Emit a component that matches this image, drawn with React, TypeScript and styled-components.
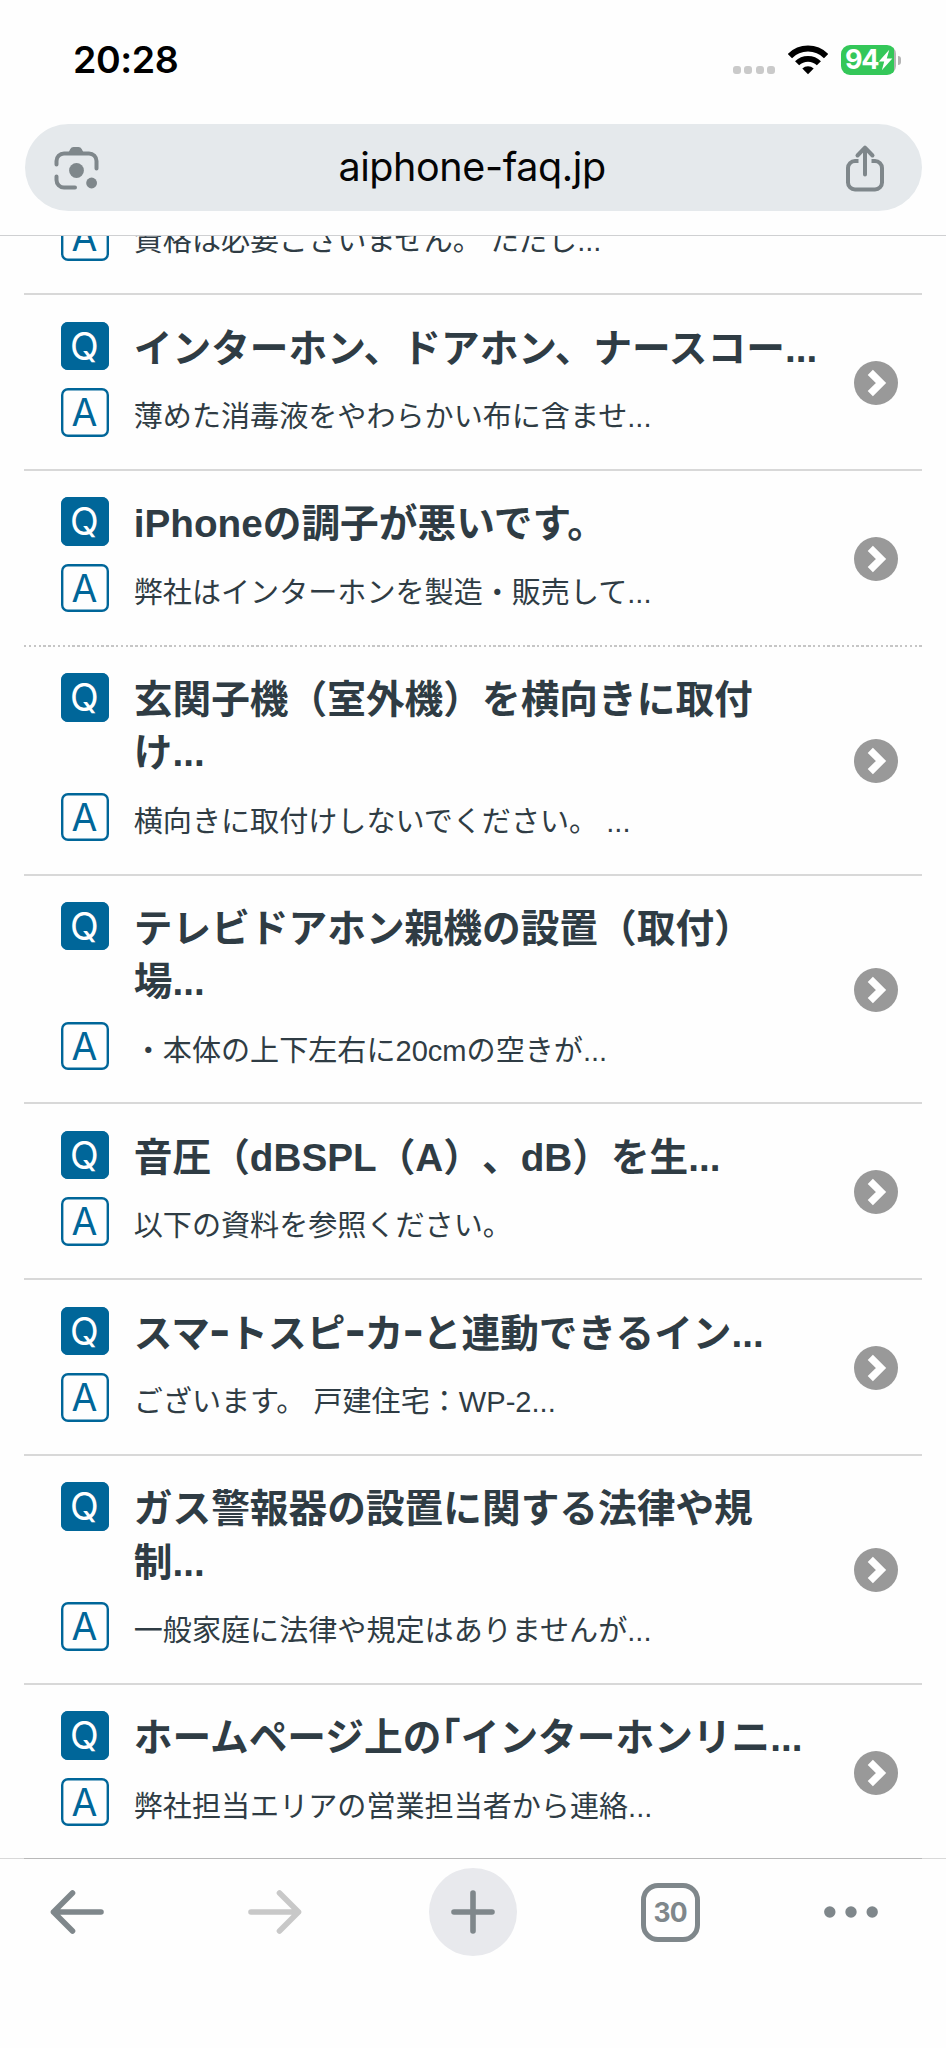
import React from 'react';
import styled, { createGlobalStyle } from 'styled-components';

const GlobalStyle = createGlobalStyle`
  html, body { margin: 0; padding: 0; background: #fefefe; }
  * { box-sizing: border-box; }
`;

const textFont = `'Liberation Sans', 'Noto Sans CJK JP', sans-serif`;
const systemFont = `Inter, sans-serif`;
const iconGray = '#7f878b';

const Screen = styled.div`
  width: 946px;
  height: 2048px;
  display: flex;
  flex-direction: column;
  overflow: hidden;
  background: #fefefe;
`;

const StatusBar = styled.header`
  flex: none;
  height: 124px;
  padding: 0 45px 4px 73px;
  display: flex;
  align-items: center;
  justify-content: space-between;
`;

const Clock = styled.time`
  font: 600 37.5px/46px ${systemFont};
  letter-spacing: -0.4px;
  color: #000;
`;

const StatusIcons = styled.div`
  display: flex;
  align-items: center;
`;

const SignalDots = styled.div`
  display: flex;
  gap: 3.3px;
  margin: 20px 13px 0 0;
`;

const SignalDot = styled.i`
  width: 8px;
  height: 8px;
  border-radius: 3px;
  background: #cacaca;
`;

const WifiSvg = styled.svg`
  width: 40px;
  height: 30px;
  margin-right: 13px;
`;

const Battery = styled.div`
  width: 55px;
  height: 30px;
  border-radius: 9px;
  background: linear-gradient(90deg, #34c759 52.5px, #b4b4b4 52.5px);
  display: flex;
  align-items: center;
  padding-left: 4px;
  font: 700 27px/30px ${systemFont};
  letter-spacing: -1.4px;
  color: #fff;
`;

const BatteryNub = styled.i`
  width: 3px;
  height: 9px;
  margin-left: 2px;
  border-radius: 0 4px 4px 0;
  background: #b4b4b4;
`;

const AddressArea = styled.div`
  flex: none;
  height: 112px;
  padding: 0 24.5px;
  border-bottom: 1px solid #cfd0d2;
`;

const AddressPill = styled.div`
  height: 87px;
  padding: 0 36.3px 0 28.5px;
  border-radius: 44px;
  background: #e5e9ec;
  display: flex;
  align-items: center;
  justify-content: space-between;
`;

const Url = styled.span`
  margin-top: -2px;
  font: 400 39.5px/50px ${systemFont};
  letter-spacing: -0.4px;
  color: #050505;
`;

const Viewport = styled.main`
  flex: none;
  height: 1622px;
  overflow: hidden;
`;

const FaqList = styled.ul`
  list-style: none;
  margin: -23.5px 24px 0;
  padding: 0;
`;

const FaqItem = styled.li<{ $dotted?: boolean }>`
  display: flex;
  align-items: center;
  padding: 26.4px 24.2px 32.1px 36.6px;
  font-family: ${textFont};
  color: #2f3c44;
  text-spacing-trim: space-all;
  border-bottom: 2px solid #d8d8d8;
  ${p => p.$dotted && `
    border-bottom-color: transparent;
    background: repeating-linear-gradient(90deg, #c6c6c6 0 2.42px, #fefefe 2.42px 4.84px) border-box left bottom / 100% 2px no-repeat;
  `}
`;

const TrailingItem = styled(FaqItem)`
  padding-top: 0;
`;

const Body = styled.div`
  flex: 1;
  min-width: 0;
  display: flex;
  flex-direction: column;
  gap: 13.3px;
`;

const Line = styled.div`
  display: flex;
  align-items: flex-start;
  gap: 24.6px;
`;

const Badge = styled.span<{ $filled?: boolean }>`
  flex: none;
  width: 48.6px;
  height: 48.6px;
  padding-right: 1px;
  border-radius: 7px;
  box-shadow: inset 0 0 0 2.4px #006699;
  background: ${p => (p.$filled ? '#006699' : '#fefefe')};
  color: ${p => (p.$filled ? '#fff' : '#006699')};
  font: 400 37.5px/49.5px ${systemFont};
  text-align: center;
`;

const Question = styled.h2<{ $wide?: boolean }>`
  margin: 0 ${p => (p.$wide ? '-30px' : '0')} 0 0;
  font-size: 38.7px;
  line-height: 53.3px;
  font-weight: 700;
`;

const Answer = styled.p`
  margin: 4.8px 0 -4.8px;
  font-size: 29.08px;
  line-height: 48.6px;
`;

const ArrowSvg = styled.svg`
  flex: none;
  width: 44px;
  height: 44px;
  margin: 7.5px 0 0 36px;
`;

const Toolbar = styled.nav`
  flex: 1;
  background: #fefefe;
`;

const Divider = styled.div`
  height: 1px;
  padding: 0 24px;
  background: #d9d9d9;
`;

const DividerInset = styled.div`
  height: 1px;
  background: #b9b9b9;
`;

const Actions = styled.div`
  height: 106px;
  display: grid;
  grid-template-columns: 176px 198px 198px 198px 176px;
  align-items: center;
  justify-items: center;
  color: ${iconGray};
`;

const Action = styled.button<{ $align?: string; $muted?: boolean }>`
  display: flex;
  padding: 0;
  border: 0;
  background: none;
  color: ${p => (p.$muted ? '#c8c8c8' : 'inherit')};
  justify-self: ${p => p.$align || 'center'};
  margin: ${p => (p.$align === 'start' ? '0 0 0 50px' : p.$align === 'end' ? '0 68px 0 0' : '0')};
`;

const NewTab = styled(Action)`
  width: 88px;
  height: 88px;
  border-radius: 50%;
  background: #e8e9ed;
  align-items: center;
  justify-content: center;
`;

const TabCount = styled(Action)`
  width: 59px;
  height: 59px;
  margin-right: 1.5px;
  border: 5px solid ${iconGray};
  border-radius: 17px;
  align-items: center;
  justify-content: center;
  font: 700 26.5px/30px ${systemFont};
  letter-spacing: -0.8px;
`;

const LensIcon = () => (
  <svg width="46" height="46" viewBox="0 0 46 46" fill="none" stroke={iconGray} strokeWidth="4" strokeLinecap="round">
    <path d="M3.5 19.5V16a7.5 7.5 0 0 1 7.5-7.5h25a7.5 7.5 0 0 1 7.5 7.5v7.5M3.5 31.5V35a7.5 7.5 0 0 0 7.5 7.5h11" />
    <path d="M15 8.5l2.3-4.4Q18.3 2 20.5 2h5q2.2 0 3.2 2.1L31 8.5z" fill={iconGray} stroke="none" />
    <circle cx="23.5" cy="25.5" r="7.4" fill={iconGray} stroke="none" />
    <circle cx="38.6" cy="38" r="5.4" fill={iconGray} stroke="none" />
  </svg>
);

const ShareIcon = () => (
  <svg width="40" height="48" viewBox="0 0 40 48" fill="none" stroke={iconGray} strokeWidth="4" strokeLinecap="round" strokeLinejoin="round">
    <path d="M13.5 17H10a7 7 0 0 0-7 7v14.5a7 7 0 0 0 7 7h20a7 7 0 0 0 7-7V24a7 7 0 0 0-7-7h-3.5" strokeLinecap="butt" />
    <path d="M20 4v26.5M12.5 11.5L20 3.7l7.5 7.8" />
  </svg>
);

const WifiIcon = () => (
  <WifiSvg viewBox="0 0 40 30">
    <g fill="none" stroke="#000" strokeWidth="6">
      <path d="M1.9 11.1a25.6 25.6 0 0 1 36.2 0" />
      <path d="M9.1 18.3a15.4 15.4 0 0 1 21.8 0" strokeWidth="5.8" />
    </g>
    <path d="M20 29.3l-5.7-5.9a8.4 8.4 0 0 1 11.4 0z" />
  </WifiSvg>
);

const Bolt = () => (
  <svg width="15" height="22" viewBox="0 0 14 20">
    <path d="M10.5 0.5L0.8 11.3h5L3.6 19.5 13.4 8.5H8.2z" fill="#fff" />
  </svg>
);

const Arrow = () => (
  <ArrowSvg viewBox="0 0 44 44">
    <circle cx="22" cy="22" r="22" fill="#999" />
    <path d="M16.3 11.3L27 22 16.3 32.7" fill="none" stroke="#fff" strokeWidth="7.3" />
  </ArrowSvg>
);

const faqs = [
  { q: 'インターホン、ドアホン、ナースコー...', a: '薄めた消毒液をやわらかい布に含ませ...', wide: true },
  { q: 'iPhoneの調子が悪いです。', a: '弊社はインターホンを製造・販売して...', dotted: true },
  { q: '玄関子機（室外機）を横向きに取付け...', a: '横向きに取付けしないでください。 ...' },
  { q: 'テレビドアホン親機の設置（取付）場...', a: '・本体の上下左右に20cmの空きが...' },
  { q: '音圧（dBSPL（A）、dB）を生...', a: '以下の資料を参照ください。' },
  { q: 'スマｰトスピｰカｰと連動できるイン...', a: 'ございます。 戸建住宅：WP-2...' },
  { q: 'ガス警報器の設置に関する法律や規制...', a: '一般家庭に法律や規定はありませんが...' },
  { q: 'ホームページ上の｢インターホンリニ...', a: '弊社担当エリアの営業担当者から連絡...', wide: true },
];

export default function App() {
  return (
    <>
      <GlobalStyle />
      <Screen lang="ja">
        <StatusBar>
          <Clock>20:28</Clock>
          <StatusIcons>
            <SignalDots>
              <SignalDot /><SignalDot /><SignalDot /><SignalDot />
            </SignalDots>
            <WifiIcon />
            <Battery>94<Bolt /></Battery>
            <BatteryNub />
          </StatusIcons>
        </StatusBar>
        <AddressArea>
          <AddressPill>
            <LensIcon />
            <Url>aiphone-faq.jp</Url>
            <ShareIcon />
          </AddressPill>
        </AddressArea>
        <Viewport>
          <FaqList>
            <TrailingItem>
              <Line>
                <Badge>A</Badge>
                <Answer>資格は必要ございません。 ただし...</Answer>
              </Line>
            </TrailingItem>
            {faqs.map(f => (
              <FaqItem key={f.q} $dotted={f.dotted}>
                <Body>
                  <Line>
                    <Badge $filled>Q</Badge>
                    <Question $wide={f.wide}>{f.q}</Question>
                  </Line>
                  <Line>
                    <Badge>A</Badge>
                    <Answer>{f.a}</Answer>
                  </Line>
                </Body>
                <Arrow />
              </FaqItem>
            ))}
          </FaqList>
        </Viewport>
        <Toolbar>
          <Divider><DividerInset /></Divider>
          <Actions>
            <Action $align="start">
              <svg width="54" height="46" viewBox="0 0 54 46" fill="none" stroke="currentColor" strokeWidth="5.6" strokeLinecap="round" strokeLinejoin="round">
                <path d="M51 23H3.5M22.5 4L3.5 23l19 19" />
              </svg>
            </Action>
            <Action $muted>
              <svg width="54" height="46" viewBox="0 0 54 46" fill="none" stroke="currentColor" strokeWidth="5.6" strokeLinecap="round" strokeLinejoin="round">
                <path d="M3 23h47.5M31.5 4l19 19-19 19" />
              </svg>
            </Action>
            <NewTab>
              <svg width="44" height="44" viewBox="0 0 44 44" stroke={iconGray} strokeWidth="5.6" strokeLinecap="round">
                <path d="M22 3v38M3 22h38" />
              </svg>
            </NewTab>
            <TabCount>30</TabCount>
            <Action $align="end">
              <svg width="54" height="12" viewBox="0 0 54 12" fill="currentColor">
                <circle cx="5.8" cy="6" r="5.7" />
                <circle cx="27" cy="6" r="5.7" />
                <circle cx="48.2" cy="6" r="5.7" />
              </svg>
            </Action>
          </Actions>
        </Toolbar>
      </Screen>
    </>
  );
}
